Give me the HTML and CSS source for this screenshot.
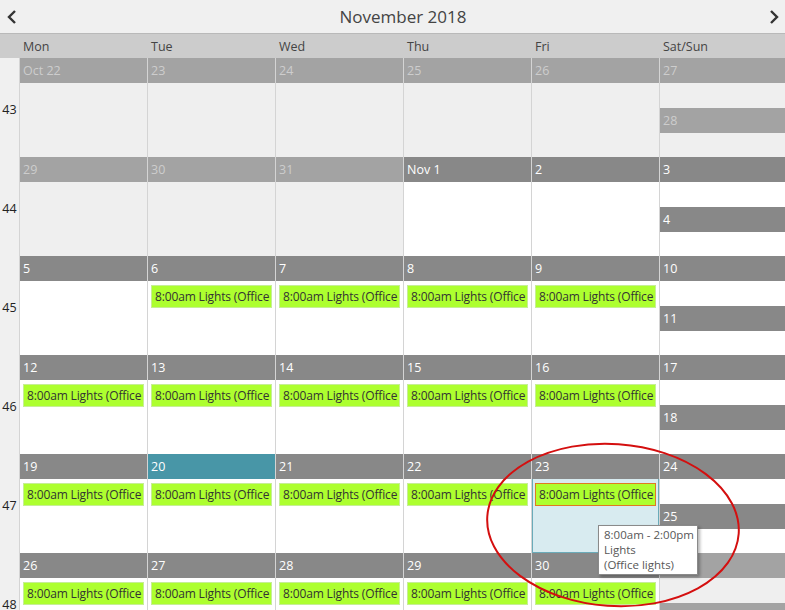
FILE: index.html
```html
<!DOCTYPE html>
<html>
<head>
<meta charset="utf-8">
<link rel="stylesheet" href="styles.css">
</head>
<body>
<div class="page">
  <div class="topbar">
    <svg class="nav" width="12" height="16" viewBox="0 0 12 16"><polyline points="9,2 3,8 9,14" fill="none" stroke="#333" stroke-width="2.4"/></svg>
    <div class="title">November 2018</div>
    <svg class="nav" width="12" height="16" viewBox="0 0 12 16"><polyline points="3,2 9,8 3,14" fill="none" stroke="#333" stroke-width="2.4"/></svg>
  </div>
  <div class="cal">
    <div class="corner"></div>
    <div class="dow">Mon</div><div class="dow">Tue</div><div class="dow">Wed</div><div class="dow">Thu</div><div class="dow">Fri</div><div class="dow">Sat/Sun</div>

    <div class="wk">43</div>
    <div class="day other"><div class="bar">Oct 22</div><div class="body"></div></div>
    <div class="day other"><div class="bar">23</div><div class="body"></div></div>
    <div class="day other"><div class="bar">24</div><div class="body"></div></div>
    <div class="day other"><div class="bar">25</div><div class="body"></div></div>
    <div class="day other"><div class="bar">26</div><div class="body"></div></div>
    <div class="day wkend"><div class="half other"><div class="bar">27</div><div class="body"></div></div><div class="half other"><div class="bar">28</div><div class="body"></div></div></div>

    <div class="wk">44</div>
    <div class="day other"><div class="bar">29</div><div class="body"></div></div>
    <div class="day other"><div class="bar">30</div><div class="body"></div></div>
    <div class="day other"><div class="bar">31</div><div class="body"></div></div>
    <div class="day"><div class="bar">Nov 1</div><div class="body"></div></div>
    <div class="day"><div class="bar">2</div><div class="body"></div></div>
    <div class="day wkend"><div class="half"><div class="bar">3</div><div class="body"></div></div><div class="half"><div class="bar">4</div><div class="body"></div></div></div>

    <div class="wk">45</div>
    <div class="day"><div class="bar">5</div><div class="body"></div></div>
    <div class="day"><div class="bar">6</div><div class="body"><div class="ev">8:00am Lights (Office lights)</div></div></div>
    <div class="day"><div class="bar">7</div><div class="body"><div class="ev">8:00am Lights (Office lights)</div></div></div>
    <div class="day"><div class="bar">8</div><div class="body"><div class="ev">8:00am Lights (Office lights)</div></div></div>
    <div class="day"><div class="bar">9</div><div class="body"><div class="ev">8:00am Lights (Office lights)</div></div></div>
    <div class="day wkend"><div class="half"><div class="bar">10</div><div class="body"></div></div><div class="half"><div class="bar">11</div><div class="body"></div></div></div>

    <div class="wk">46</div>
    <div class="day"><div class="bar">12</div><div class="body"><div class="ev">8:00am Lights (Office lights)</div></div></div>
    <div class="day"><div class="bar">13</div><div class="body"><div class="ev">8:00am Lights (Office lights)</div></div></div>
    <div class="day"><div class="bar">14</div><div class="body"><div class="ev">8:00am Lights (Office lights)</div></div></div>
    <div class="day"><div class="bar">15</div><div class="body"><div class="ev">8:00am Lights (Office lights)</div></div></div>
    <div class="day"><div class="bar">16</div><div class="body"><div class="ev">8:00am Lights (Office lights)</div></div></div>
    <div class="day wkend"><div class="half"><div class="bar">17</div><div class="body"></div></div><div class="half"><div class="bar">18</div><div class="body"></div></div></div>

    <div class="wk">47</div>
    <div class="day"><div class="bar">19</div><div class="body"><div class="ev">8:00am Lights (Office lights)</div></div></div>
    <div class="day today"><div class="bar">20</div><div class="body"><div class="ev">8:00am Lights (Office lights)</div></div></div>
    <div class="day"><div class="bar">21</div><div class="body"><div class="ev">8:00am Lights (Office lights)</div></div></div>
    <div class="day"><div class="bar">22</div><div class="body"><div class="ev">8:00am Lights (Office lights)</div></div></div>
    <div class="day selected"><div class="bar">23</div><div class="body"><div class="ev sel">8:00am Lights (Office lights)</div></div></div>
    <div class="day wkend"><div class="half"><div class="bar">24</div><div class="body"></div></div><div class="half"><div class="bar">25</div><div class="body"></div></div></div>

    <div class="wk">48</div>
    <div class="day"><div class="bar">26</div><div class="body"><div class="ev">8:00am Lights (Office lights)</div></div></div>
    <div class="day"><div class="bar">27</div><div class="body"><div class="ev">8:00am Lights (Office lights)</div></div></div>
    <div class="day"><div class="bar">28</div><div class="body"><div class="ev">8:00am Lights (Office lights)</div></div></div>
    <div class="day"><div class="bar">29</div><div class="body"><div class="ev">8:00am Lights (Office lights)</div></div></div>
    <div class="day"><div class="bar">30</div><div class="body"><div class="ev">8:00am Lights (Office lights)</div></div></div>
    <div class="day wkend"><div class="half other"><div class="bar">Dec 1</div><div class="body"></div></div><div class="half other"><div class="bar">2</div><div class="body"></div></div></div>
  </div>

  <div class="tooltip">8:00am - 2:00pm<br>Lights<br>(Office lights)</div>
  <svg class="mark" width="785" height="610" viewBox="0 0 785 610"><ellipse cx="613" cy="525" rx="126" ry="81" transform="rotate(4 613 525)" fill="none" stroke="#d40f0f" stroke-width="2"/></svg>
</div>
</body>
</html>
```

FILE: styles.css
```css
html, body {
  margin: 0;
  padding: 0;
  background: #f0f0f0;
}
.page {
  position: relative;
  width: 785px;
  height: 610px;
  overflow: hidden;
  font-family: "Open Sans", "Noto Sans", sans-serif;
}
.topbar {
  height: 33px;
  display: flex;
  align-items: center;
  justify-content: space-between;
  padding: 0 5px 0 6px;
  box-sizing: border-box;
  background: #f0f0f0;
}
.nav {
  display: block;
}
.title {
  font-size: 17px;
  color: #444;
  margin-top: 0;
  margin-left: 20px;
}
.cal {
  display: grid;
  grid-template-columns: 19px repeat(5, 128px) 126px;
  grid-template-rows: 25px repeat(6, 99px);
  font-size: 12.5px;
}
.corner {
  background: #cccccc;
  border-top: 1px solid #b9b9b9;
}
.dow {
  background: #cccccc;
  border-top: 1px solid #b9b9b9;
  color: #444;
  padding-left: 4px;
  line-height: 26px;
  font-size: 12.5px;
}
.wk {
  background: #f0f0f0;
  color: #222;
  display: flex;
  align-items: center;
  justify-content: center;
  font-size: 12.5px;
  padding-top: 3px;
}
.day {
  border-left: 1px solid #d4d4d4;
  display: flex;
  flex-direction: column;
  background: #fff;
  overflow: hidden;
  min-width: 0;
}
.half {
  flex: 1;
  display: flex;
  flex-direction: column;
  min-height: 0;
}
.bar {
  height: 25px;
  line-height: 26px;
  flex: none;
  background: #888888;
  color: #fff;
  padding-left: 3px;
}
.body {
  flex: 1;
  background: #fff;
  min-height: 0;
  overflow: hidden;
}
.other .bar {
  background: #a3a3a3;
  color: #cdcdcd;
}
.other .body {
  background: #efefef;
}
.today .bar {
  background: #4896a7;
}
.selected .body {
  background: #d8ebf0;
  box-shadow: inset 1px 0 0 #6aabb9, inset -1px -1px 0 #6aabb9;
}
.ev {
  margin: 4px 3px 0 3px;
  height: 23px;
  box-sizing: border-box;
  background: #adff2f;
  border: 1px solid #c6ee95;
  color: #333;
  padding-left: 3px;
  font-size: 12px;
  letter-spacing: -0.15px;
  line-height: 21px;
  white-space: nowrap;
  overflow: hidden;
}
.ev.sel {
  border-color: #e07a22;
}
.tooltip {
  position: absolute;
  left: 598px;
  top: 525px;
  width: 100px;
  height: 50px;
  box-sizing: border-box;
  background: #fff;
  border: 1px solid #8a8a8a;
  box-shadow: 2px 2px 3px rgba(0,0,0,0.3);
  padding: 1px 0 0 5px;
  font-size: 11.5px;
  line-height: 15px;
  color: #575757;
}
.mark {
  position: absolute;
  left: 0;
  top: 0;
  pointer-events: none;
}
```
